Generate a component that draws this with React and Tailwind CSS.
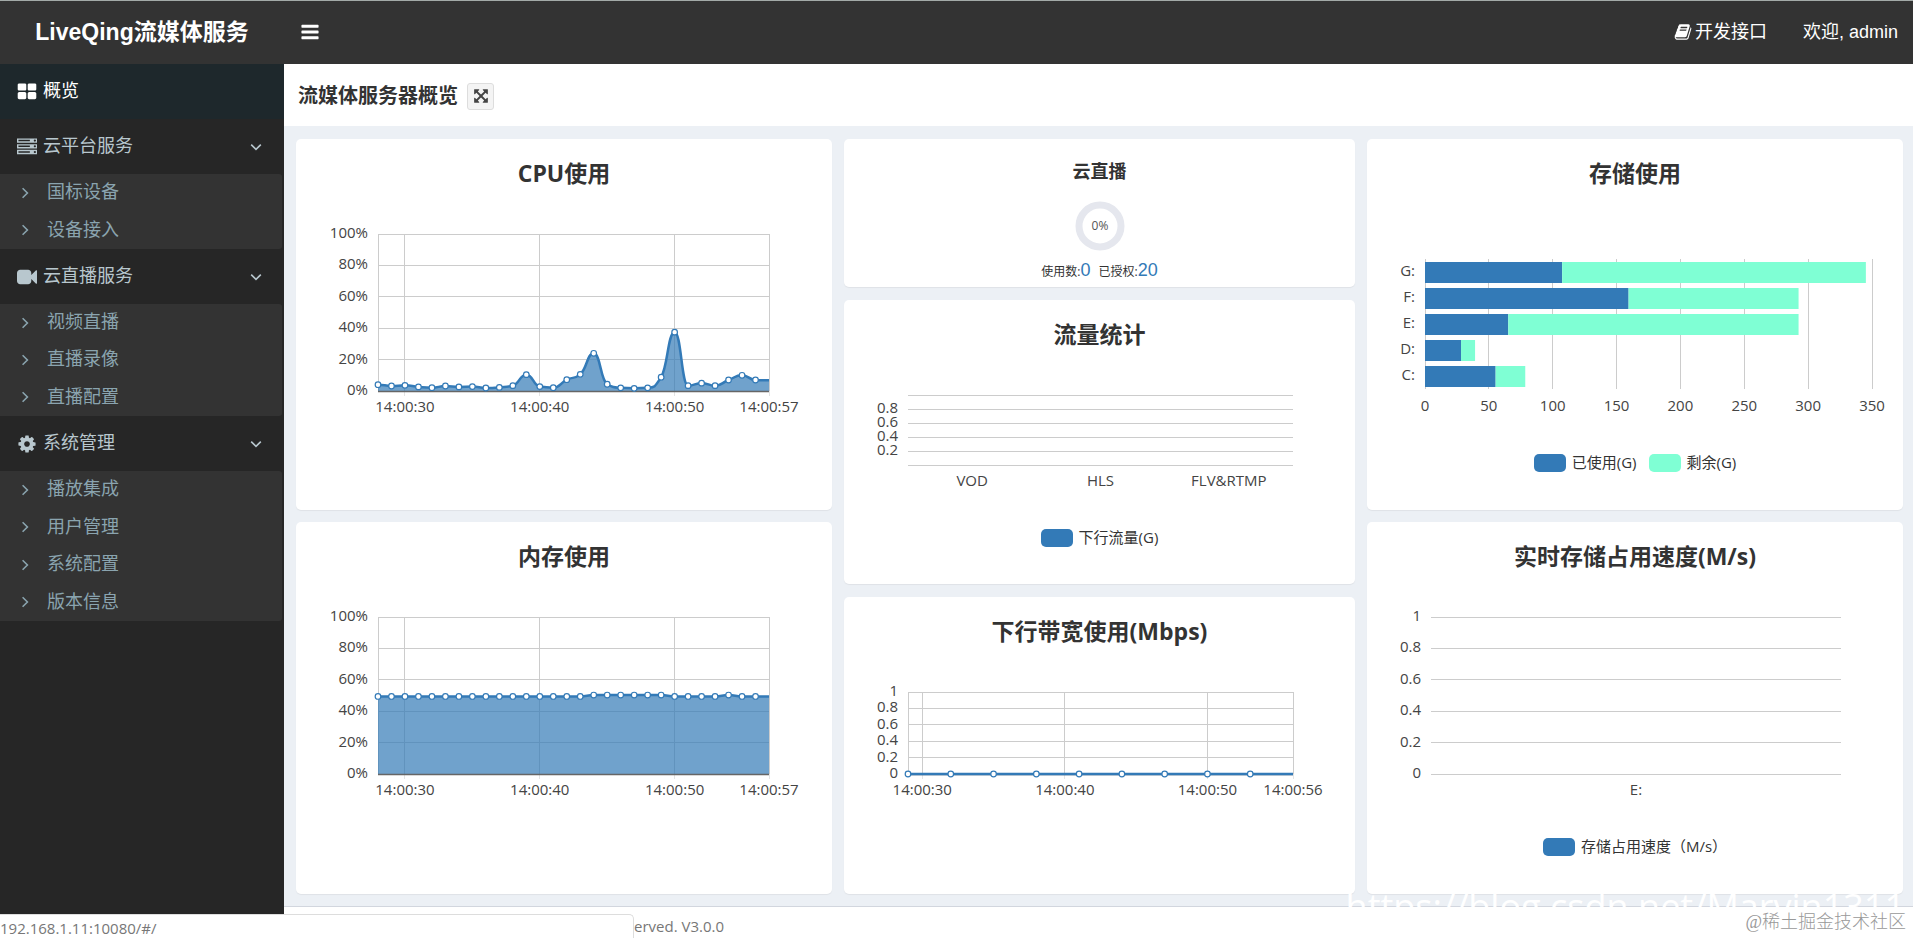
import React, { useLayoutEffect, useRef, useState } from "react";

const FA = {
  thLarge:
    "M832 1024v384q0 52-38 90t-90 38h-512q-52 0-90-38t-38-90v-384q0-52 38-90t90-38h512q52 0 90 38t38 90zm0-768v384q0 52-38 90t-90 38h-512q-52 0-90-38t-38-90v-384q0-52 38-90t90-38h512q52 0 90 38t38 90zm896 768v384q0 52-38 90t-90 38h-512q-52 0-90-38t-38-90v-384q0-52 38-90t90-38h512q52 0 90 38t38 90zm0-768v384q0 52-38 90t-90 38h-512q-52 0-90-38t-38-90v-384q0-52 38-90t90-38h512q52 0 90 38t38 90z",
  server:
    "M128 1408h1024v-128h-1024v128zm0-512h1024v-128h-1024v128zm1568 448q0-40-28-68t-68-28-68 28-28 68 28 68 68 28 68-28 28-68zm-1568-960h1024v-128h-1024v128zm1568 448q0-40-28-68t-68-28-68 28-28 68 28 68 68 28 68-28 28-68zm0-512q0-40-28-68t-68-28-68 28-28 68 28 68 68 28 68-28 28-68zm96 832v384h-1792v-384h1792zm0-512v384h-1792v-384h1792zm0-512v384h-1792v-384h1792z",
  video:
    "M1792 352v1088q0 42-39 59-13 5-25 5-27 0-45-19l-403-403v166q0 119-84.5 203.5t-203.5 84.5h-704q-119 0-203.5-84.5t-84.5-203.5v-704q0-119 84.5-203.5t203.5-84.5h704q119 0 203.5 84.5t84.5 203.5v165l403-402q18-19 45-19 12 0 25 5 39 17 39 59z",
  cog:
    "M1152 896q0-106-75-181t-181-75-181 75-75 181 75 181 181 75 181-75 75-181zm512-109v222q0 12-8 23t-20 13l-185 28q-19 54-39 91 35 50 107 138 10 12 10 25t-9 23q-27 37-99 108t-94 71q-12 0-26-9l-138-108q-44 23-91 38-16 136-29 186-7 28-36 28h-222q-14 0-24.5-8.5t-11.5-21.5l-28-184q-49-16-90-37l-141 107q-10 9-25 9-14 0-25-11-126-114-165-168-7-10-7-23 0-12 8-23 15-21 51-66.5t54-70.5q-27-50-41-99l-183-27q-13-2-21-12.5t-8-23.5v-222q0-12 8-23t19-13l186-28q14-46 39-92-40-57-107-138-10-12-10-24 0-10 9-23 26-36 98.5-107.5t94.5-71.5q13 0 26 10l138 107q44-23 91-38 16-136 29-186 7-28 36-28h222q14 0 24.5 8.5t11.5 21.5l28 184q49 16 90 37l142-107q9-9 24-9 13 0 25 10 129 119 165 170 7 8 7 22 0 12-8 23-15 21-51 66.5t-54 70.5q26 50 41 98l183 28q13 2 21 12.5t8 23.5z",
  bars:
    "M1664 1344v128q0 26-19 45t-45 19h-1408q-26 0-45-19t-19-45v-128q0-26 19-45t45-19h1408q26 0 45 19t19 45zm0-512v128q0 26-19 45t-45 19h-1408q-26 0-45-19t-19-45v-128q0-26 19-45t45-19h1408q26 0 45 19t19 45zm0-512v128q0 26-19 45t-45 19h-1408q-26 0-45-19t-19-45v-128q0-26 19-45t45-19h1408q26 0 45 19t19 45z",
  book:
    "M1703 478q40 57 18 129l-275 906q-19 64-76.5 107.5t-122.5 43.5h-923q-77 0-148.5-53.5t-99.5-131.5q-24-67-2-127 0-4 3-27t4-37q1-8-3-21.5t-3-19.5q2-11 8-21t16.5-23.5 16.5-23.5q23-38 45-91.5t30-91.5q3-10 .5-30t-.5-28q3-11 17-28t17-23q21-36 42-92t25-90q1-9-2.5-32t.5-28q4-13 22-30.5t22-22.5q19-26 42.5-84.5t27.5-96.5q1-8-3-25.5t-2-26.5q2-8 9-18t18-23 17-21q8-12 16.5-30.5t15-35 16-36 19.5-32 26.5-23.5 36-11.5 47.5 5.5l-1 3q38-9 51-9h761q74 0 114 56t18 130l-274 906q-36 119-71.5 153.5t-128.5 34.5h-869q-27 0-38 15-11 16-1 43 24 70 144 70h923q29 0 56-15.5t35-41.5l300-987q7-22 5-57 38 15 59 43zm-1064 2q-4 13 2 22.5t20 9.5h608q13 0 25.5-9.5t16.5-22.5l21-64q4-13-2-22.5t-20-9.5h-608q-13 0-25.5 9.5t-16.5 22.5zm-83 256q-4 13 2 22.5t20 9.5h608q13 0 25.5-9.5t16.5-22.5l21-64q4-13-2-22.5t-20-9.5h-608q-13 0-25.5 9.5t-16.5 22.5z",
  expand:
    "M1411 541l-355 355 355 355 144-144q29-31 70-14 39 17 39 59v448q0 26-19 45t-45 19h-448q-42 0-59-40-17-39 14-69l144-144-355-355-355 355 144 144q31 30 14 69-17 40-59 40h-448q-26 0-45-19t-19-45v-448q0-42 40-59 39-17 69 14l144 144 355-355-355-355-144 144q-19 19-45 19-12 0-24-5-40-17-40-59v-448q0-26 19-45t45-19h448q42 0 59 40 17 39-14 69l-144 144 355 355 355-355-144-144q-31-30-14-69 17-40 59-40h448q26 0 45 19t19 45v448q0 42-39 59-13 5-25 5-26 0-45-19z",
};

function Icon({ name, className }) {
  return (
    <svg viewBox="0 0 1792 1792" fill="currentColor" aria-hidden="true" className={className}>
      <path d={FA[name]} />
    </svg>
  );
}

function Angle({ down, className }) {
  return (
    <svg viewBox="0 0 14 14" fill="none" stroke="currentColor" strokeWidth="1.6" aria-hidden="true" className={className}>
      <path d={down ? "M2.2 4.6L7 9.4l4.8-4.8" : "M4.6 2.2L9.4 7l-4.8 4.8"} />
    </svg>
  );
}

/* ---------- charts ---------- */

const BLUE = "#337ab7";
const MINT = "#7fffd4";
const GRID = "#ccc";
const LABEL = "fill-[#444] text-[15px]";

function useWidth(initial) {
  const ref = useRef(null);
  const [width, setWidth] = useState(initial);
  useLayoutEffect(() => {
    const el = ref.current;
    const measure = () => setWidth(el.clientWidth);
    measure();
    const ro = new ResizeObserver(measure);
    ro.observe(el);
    return () => ro.disconnect();
  }, []);
  return [ref, width];
}

function ChartBox({ height, initial, label, children }) {
  const [ref, width] = useWidth(initial);
  return (
    <div ref={ref} className="w-full min-w-0">
      <svg width={width} height={height} role="img" aria-label={label} className="block">
        {children(width)}
      </svg>
    </div>
  );
}

const snap = (v) => Math.floor(v) + 0.5;
const clamp = (v, a, b) => Math.max(Math.min(a, b), Math.min(Math.max(a, b), v));

function smoothPath(pts) {
  const n = pts.length;
  const slopes = pts.map((p, i) => {
    const a = pts[Math.max(0, i - 1)];
    const b = pts[Math.min(n - 1, i + 1)];
    const d = (b[1] - a[1]) * 0.25;
    const after = clamp(p[1] + d, p[1], b[1]) - p[1];
    const before = p[1] - clamp(p[1] - d, a[1], p[1]);
    if (i === 0 || i === n - 1) return 0;
    return Math.abs(after) < Math.abs(before) ? after : before;
  });
  let d = `M${pts[0][0]} ${pts[0][1]}`;
  for (let i = 1; i < n; i++) {
    const h = (pts[i][0] - pts[i - 1][0]) / 2;
    d += `C${pts[i - 1][0] + h} ${pts[i - 1][1] + slopes[i - 1]} ${pts[i][0] - h} ${pts[i][1] - slopes[i]} ${pts[i][0]} ${pts[i][1]}`;
  }
  return d;
}

function LineChart({ title, data, max, yLabels, ticks, left, right, top, plotHeight, height, initial, every = 1, area }) {
  return (
    <ChartBox height={height} initial={initial} label={title}>
      {(w) => {
        const x1 = w - right;
        const bottom = top + plotHeight;
        const n = data.length - 1;
        const px = (i) => left + ((x1 - left) * i) / n;
        const pts = data.map((v, i) => [px(i), bottom - (v / max) * plotHeight]);
        const line = smoothPath(pts);
        return (
          <>
            {yLabels.map((t, k) => {
              const y = bottom - (plotHeight * k) / (yLabels.length - 1);
              return (
                <g key={t}>
                  <line x1={left} x2={x1} y1={snap(y)} y2={snap(y)} stroke={GRID} />
                  <text x={left - 10} y={Math.round(y) + 4} textAnchor="end" className={LABEL}>{t}</text>
                </g>
              );
            })}
            <line x1={snap(left)} x2={snap(left)} y1={top} y2={bottom} stroke={GRID} />
            {ticks.map(([i, t]) => (
              <g key={t}>
                <line x1={snap(px(i))} x2={snap(px(i))} y1={top} y2={bottom} stroke={GRID} />
                <line x1={snap(px(i))} x2={snap(px(i))} y1={bottom} y2={bottom + 5} stroke="#e4e4e4" />
                <text x={px(i)} y={bottom + 21} textAnchor="middle" className={LABEL}>{t}</text>
              </g>
            ))}
            {area && <path d={`${line}L${x1} ${bottom}L${left} ${bottom}Z`} fill={BLUE} fillOpacity="0.7" />}
            <line x1={left} x2={x1} y1={snap(bottom)} y2={snap(bottom)} stroke="#666" strokeWidth="1.5" />
            <path d={line} fill="none" stroke={BLUE} strokeWidth="2.5" />
            {pts.map((p, i) =>
              i % every === 0 && i < n ? (
                <circle key={i} cx={p[0]} cy={p[1]} r="2.8" fill="#fff" stroke={BLUE} strokeWidth="1.2" />
              ) : null
            )}
          </>
        );
      }}
    </ChartBox>
  );
}

function EmptyBarChart({ title, yLabels, categories, left, right, top, plotHeight, height, initial }) {
  return (
    <ChartBox height={height} initial={initial} label={title}>
      {(w) => {
        const x1 = w - right;
        const bottom = top + plotHeight;
        return (
          <>
            {yLabels.map((t, k) => {
              const y = bottom - (plotHeight * k) / (yLabels.length - 1);
              return (
                <g key={k}>
                  <line x1={left} x2={x1} y1={snap(y)} y2={snap(y)} stroke={GRID} />
                  {t && <text x={left - 10} y={Math.round(y) + 4} textAnchor="end" className={LABEL}>{t}</text>}
                </g>
              );
            })}
            {categories.map((t, i) => (
              <text key={t} x={left + ((x1 - left) * (i + 0.5)) / categories.length} y={bottom + 21} textAnchor="middle" className={LABEL}>
                {t}
              </text>
            ))}
          </>
        );
      }}
    </ChartBox>
  );
}

const DISKS = [
  ["G:", 107.4, 237.8],
  ["F:", 159.4, 133.1],
  ["E:", 65.2, 227.3],
  ["D:", 28.2, 11],
  ["C:", 55.3, 23.2],
];

function DiskChart() {
  const left = 58;
  const top = 60;
  const band = 26;
  const bottom = top + band * DISKS.length;
  return (
    <ChartBox height={220} initial={536} label="存储使用">
      {(w) => {
        const x1 = w - 31;
        const unit = (x1 - left) / 350;
        return (
          <>
            {[0, 50, 100, 150, 200, 250, 300, 350].map((v) => (
              <g key={v}>
                <line x1={snap(left + v * unit)} x2={snap(left + v * unit)} y1={top} y2={bottom} stroke={GRID} />
                <text x={left + v * unit} y={bottom + 22} textAnchor="middle" className={LABEL}>{v}</text>
              </g>
            ))}
            {DISKS.map(([name, used, free], i) => {
              const y = top + band * i + 3;
              return (
                <g key={name}>
                  <rect x={left} y={y} width={used * unit} height="21" fill={BLUE} />
                  <rect x={left + used * unit} y={y} width={free * unit} height="21" fill={MINT} />
                  <text x={left - 10} y={y + 14} textAnchor="end" className={LABEL}>{name}</text>
                </g>
              );
            })}
          </>
        );
      }}
    </ChartBox>
  );
}

function Legend({ items, className }) {
  return (
    <div className={`flex justify-center gap-3 text-[15px] leading-[18px] text-[#333] ${className}`}>
      {items.map(([name, color]) => (
        <div key={name} className="flex items-center gap-1.5">
          <span className={`h-[18px] w-8 rounded-[5px] ${color}`} />
          <span className="pb-0.5">{name}</span>
        </div>
      ))}
    </div>
  );
}

function Card({ title, className, children }) {
  return (
    <section className={`flex min-w-0 flex-col rounded-[5px] bg-white shadow-[0_1px_1px_rgba(0,0,0,0.06)] ${className}`}>
      <h2 className="pt-[18px] text-center text-[23px] leading-8 font-bold text-[#333]">{title}</h2>
      {children}
    </section>
  );
}

const CPU = [4, 3.2, 3.6, 2.6, 2.1, 3.2, 2.6, 2.8, 1.9, 2.3, 3.4, 10.4, 2.8, 2.1, 7.2, 10.6, 24, 4.3, 2, 1.7, 2, 8.8, 37.5, 3.4, 5, 3.4, 7, 10, 7, 6.8];
const MEM = Array.from({ length: 30 }, (_, i) => ((i >= 16 && i <= 21) || i === 26 ? 50.3 : 49.4));
const PERCENTS = ["0%", "20%", "40%", "60%", "80%", "100%"];
const DECIMALS = ["0", "0.2", "0.4", "0.6", "0.8", "1"];
const SECOND_TICKS = [
  [2, "14:00:30"],
  [12, "14:00:40"],
  [22, "14:00:50"],
  [29, "14:00:57"],
];

/* ---------- navigation ---------- */

const MENU = [
  { icon: "server", name: "云平台服务", size: "h-[75px]", items: ["国标设备", "设备接入"] },
  { icon: "video", name: "云直播服务", size: "h-[112px]", items: ["视频直播", "直播录像", "直播配置"] },
  { icon: "cog", name: "系统管理", size: "h-[150px]", items: ["播放集成", "用户管理", "系统配置", "版本信息"] },
];

function Sidebar() {
  return (
    <nav className="w-[284px] shrink-0 bg-[#262626] text-[18px]">
      <a href="#/" className="flex h-[55px] items-center gap-[6px] bg-[#1e282c] pl-[17px] text-white">
        <Icon name="thLarge" className="h-5 w-5" />
        概览
      </a>
      {MENU.map((group) => (
        <div key={group.name}>
          <button type="button" className="flex h-[55px] w-full items-center gap-[6px] pl-[17px] pr-[21px] text-[#b8c7ce]">
            <Icon name={group.icon} className="h-5 w-5" />
            {group.name}
            <Angle down className="ml-auto h-3.5 w-3.5" />
          </button>
          <ul className={`mr-[2px] flex flex-col rounded-r-[3px] bg-[#333] ${group.size}`}>
            {group.items.map((item) => (
              <li key={item} className="flex-1">
                <a href="#/" className="flex h-full items-center gap-[15px] pl-[18px] text-[#8aa4af]">
                  <Angle className="h-3.5 w-3.5" />
                  {item}
                </a>
              </li>
            ))}
          </ul>
        </div>
      ))}
    </nav>
  );
}

function Header() {
  return (
    <header className="flex h-16 items-center border-t border-[#a3aaa8] bg-[#333] pb-px text-[18px] text-white">
      <a href="#/" className="w-[284px] text-center text-[23px] font-bold">LiveQing流媒体服务</a>
      <button type="button" aria-label="切换导航" className="ml-4 p-0">
        <Icon name="bars" className="h-5 w-5" />
      </button>
      <div className="ml-auto flex items-center gap-9 pr-[15px]">
        <a href="#/" className="flex items-center gap-[3px]">
          <Icon name="book" className="h-[18px] w-[18px]" />
          开发接口
        </a>
        <a href="#/">欢迎, admin</a>
      </div>
    </header>
  );
}

function LiveCard() {
  return (
    <section className="flex h-[148px] flex-col items-center rounded-[5px] bg-white shadow-[0_1px_1px_rgba(0,0,0,0.06)]">
      <h2 className="pt-5 text-[18px] leading-6 font-bold text-[#333]">云直播</h2>
      <svg width="50" height="50" viewBox="0 0 50 50" className="mt-[18px]" role="img" aria-label="0%">
        <circle cx="25" cy="25" r="21" fill="none" stroke="#e5e7ee" strokeWidth="7" />
        <text x="25" y="29" textAnchor="middle" className="fill-[#555] text-[12px]">0%</text>
      </svg>
      <p className="mt-[7px] flex items-baseline gap-2 text-[12px] leading-6 text-[#333]">
        <span>使用数:<span className="font-[Liberation_Sans] text-[18px] text-[#337ab7]">0</span></span>
        <span>已授权:<span className="font-[Liberation_Sans] text-[18px] text-[#337ab7]">20</span></span>
      </p>
    </section>
  );
}

export default function App() {
  return (
    <div className="relative flex min-h-screen flex-col overflow-hidden bg-[#ecf0f5] font-[Liberation_Sans,Noto_Sans_CJK_SC,sans-serif]">
      <Header />
      <div className="flex grow">
        <Sidebar />
        <div className="flex min-w-0 grow flex-col">
          <div className="flex h-[62px] items-center gap-[9px] bg-white pt-0.5 pl-[14px]">
            <h1 className="text-[20px] font-bold text-[#333]">流媒体服务器概览</h1>
            <button type="button" aria-label="全屏" className="flex h-[27px] w-[27px] items-center justify-center rounded-[3px] border border-[#ddd] bg-[#f4f4f4] text-[#444]">
              <Icon name="expand" className="h-4 w-4" />
            </button>
          </div>

          <main className="grid grow grid-cols-[536fr_511fr_536fr] gap-3 pt-[13px] pr-[10px] pb-3 pl-3 font-[Open_Sans,Noto_Sans_CJK_SC,sans-serif]">
            <div className="flex min-w-0 flex-col gap-3">
              <Card title="CPU使用" className="h-[371px]">
                <LineChart title="CPU使用" data={CPU} max={100} yLabels={PERCENTS} ticks={SECOND_TICKS} left={82} right={63} top={45} plotHeight={157} height={240} initial={536} area />
              </Card>
              <Card title="内存使用" className="h-[372px]">
                <LineChart title="内存使用" data={MEM} max={100} yLabels={PERCENTS} ticks={SECOND_TICKS} left={82} right={63} top={45} plotHeight={157} height={240} initial={536} area />
              </Card>
            </div>

            <div className="flex min-w-0 flex-col gap-[13px]">
              <LiveCard />
              <Card title="流量统计" className="h-[284px]">
                <EmptyBarChart title="流量统计" yLabels={["", "0.2", "0.4", "0.6", "0.8", ""]} categories={["VOD", "HLS", "FLV&RTMP"]} left={64} right={62} top={45} plotHeight={70} height={145} initial={511} />
                <Legend className="mt-[33px]" items={[["下行流量(G)", "bg-[#337ab7]"]]} />
              </Card>
              <Card title="下行带宽使用(Mbps)" className="h-[297px]">
                <LineChart
                  title="下行带宽使用(Mbps)"
                  data={Array(28).fill(0)}
                  max={1}
                  yLabels={DECIMALS}
                  ticks={[[1, "14:00:30"], [11, "14:00:40"], [21, "14:00:50"], [27, "14:00:56"]]}
                  left={64}
                  right={62}
                  top={45}
                  plotHeight={82}
                  height={160}
                  initial={511}
                  every={3}
                />
              </Card>
            </div>

            <div className="flex min-w-0 flex-col gap-3">
              <Card title="存储使用" className="h-[371px]">
                <div className="pt-[10px]">
                  <DiskChart />
                </div>
                <Legend className="mt-[34px]" items={[["已使用(G)", "bg-[#337ab7]"], ["剩余(G)", "bg-[#7fffd4]"]]} />
              </Card>
              <Card title="实时存储占用速度(M/s)" className="h-[372px]">
                <EmptyBarChart title="实时存储占用速度(M/s)" yLabels={DECIMALS} categories={["E:"]} left={64} right={62} top={45} plotHeight={157} height={230} initial={536} />
                <Legend className="mt-[35px]" items={[["存储占用速度（M/s）", "bg-[#337ab7]"]]} />
              </Card>
            </div>
          </main>

          <footer className="relative h-8 border-t border-[#d2d6de] bg-white pl-[350px] font-[Open_Sans,sans-serif] text-[15px] leading-[38px] text-[#777]">
            erved. V3.0.0
          </footer>
        </div>
      </div>

      <div className="absolute bottom-0 left-0 flex h-6 w-[634px] items-center rounded-tr-[5px] border-t border-r border-[#ddd] bg-white pt-1 font-[Open_Sans,sans-serif] text-[15px] text-[#777]">
        192.168.1.11:10080/#/
      </div>
      <div className="pointer-events-none absolute right-2 bottom-[31px] h-4 overflow-hidden font-[Open_Sans,sans-serif] text-[36px] leading-[32px] text-white">
        https://blog.csdn.net/Marvin1311
      </div>
      <div className="pointer-events-none absolute right-[7px] bottom-1 font-[Liberation_Serif,Noto_Sans_CJK_SC,serif] text-[18px] leading-6 font-light text-[#999]">@稀土掘金技术社区</div>
    </div>
  );
}
